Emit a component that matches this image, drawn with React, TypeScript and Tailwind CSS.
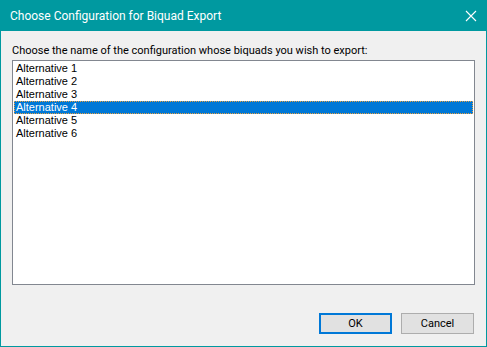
import React, { useState } from 'react';

const items = ['Alternative 1', 'Alternative 2', 'Alternative 3', 'Alternative 4', 'Alternative 5', 'Alternative 6'];

export default function App() {
  const [selected, setSelected] = useState(3);

  return (
    <div className="w-[487px] h-[347px] flex flex-col bg-[#f0f0f0] border-x border-b border-[#0099a0] font-['Roboto',sans-serif]">
      {/* Title bar */}
      <div className="h-[31px] -mx-px flex items-center justify-between bg-[#0099a0] text-white">
        <span className="pl-[10px] text-[12px] leading-none">Choose Configuration for Biquad Export</span>
        <svg className="mr-[10px]" width="12" height="12" viewBox="0 0 12 12" fill="none" stroke="white" strokeWidth="1.1">
          <path d="M1 1L11 11M11 1L1 11" />
        </svg>
      </div>

      <div className="flex-1 flex flex-col px-[11px]">
        <div className="mt-[10px] h-[19px] text-[11px] leading-[19px] text-black">
          Choose the name of the configuration whose biquads you wish to export:
        </div>

        {/* List box */}
        <div className="h-[225px] border border-[#828790] bg-white p-px font-['Liberation_Sans',sans-serif] text-[11px] text-black">
          {items.map((item, i) => (
            <div
              key={item}
              onClick={() => setSelected(i)}
              className={`h-[13px] leading-[13px] pl-[2px] ${
                i === selected ? 'bg-[#0078d7] text-white outline-1 outline-dotted outline-[#e8a040] -outline-offset-1' : ''
              }`}
            >
              {item}
            </div>
          ))}
        </div>

        {/* Buttons */}
        <div className="mt-[28px] flex justify-end gap-[9px] pr-px">
          <button className="w-[73px] h-[21px] border-2 border-[#0078d7] bg-[#e1e1e1] text-[11px] leading-none text-black">
            OK
          </button>
          <button className="w-[73px] h-[21px] border border-[#adadad] bg-[#e1e1e1] text-[11px] leading-none text-black">
            Cancel
          </button>
        </div>
      </div>
    </div>
  );
}
